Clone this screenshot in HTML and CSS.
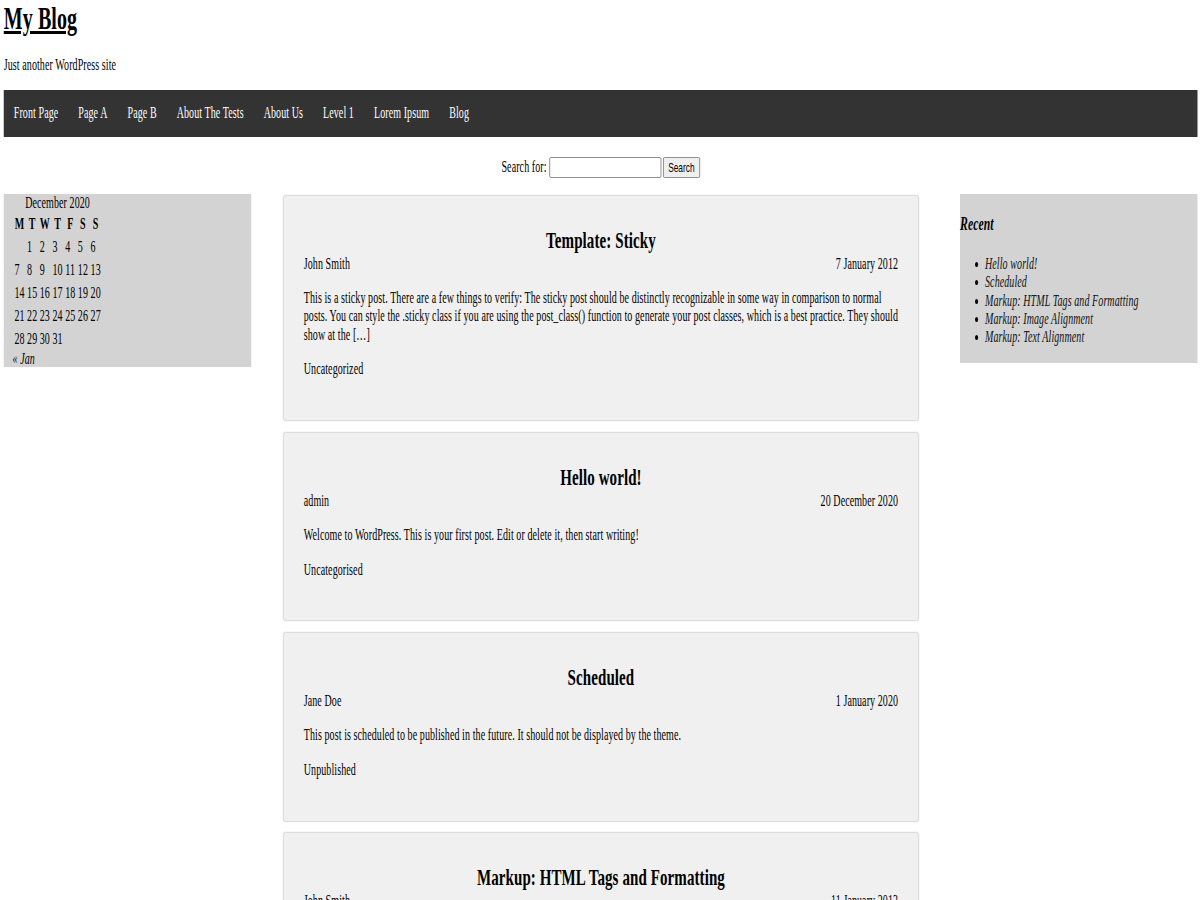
FILE: index.html
```html
<!DOCTYPE html>
<html lang="en">
<head>
<meta charset="utf-8">
<title>My Blog – Just another WordPress site</title>
<link rel="stylesheet" href="styles.css">
</head>
<body>
<div class="page">
  <header class="site-header">
    <h1 class="site-title"><a href="#">My Blog</a></h1>
    <p class="tagline">Just another WordPress site</p>
  </header>

  <nav class="main-nav">
    <ul>
      <li><a href="#">Front Page</a></li>
      <li><a href="#">Page A</a></li>
      <li><a href="#">Page B</a></li>
      <li><a href="#">About The Tests</a></li>
      <li><a href="#">About Us</a></li>
      <li><a href="#">Level 1</a></li>
      <li><a href="#">Lorem Ipsum</a></li>
      <li><a href="#">Blog</a></li>
    </ul>
  </nav>

  <form class="search" onsubmit="return false">
    <label for="s">Search for:</label>
    <input id="s" type="text">
    <button type="button">Search</button>
  </form>

  <div class="layout">
    <aside class="sidebar sidebar-left">
      <table class="calendar">
        <caption>December 2020</caption>
        <thead>
          <tr><th>M</th><th>T</th><th>W</th><th>T</th><th>F</th><th>S</th><th>S</th></tr>
        </thead>
        <tbody>
          <tr><td></td><td>1</td><td>2</td><td>3</td><td>4</td><td>5</td><td>6</td></tr>
          <tr><td>7</td><td>8</td><td>9</td><td>10</td><td>11</td><td>12</td><td>13</td></tr>
          <tr><td>14</td><td>15</td><td>16</td><td>17</td><td>18</td><td>19</td><td>20</td></tr>
          <tr><td>21</td><td>22</td><td>23</td><td>24</td><td>25</td><td>26</td><td>27</td></tr>
          <tr><td>28</td><td>29</td><td>30</td><td>31</td><td colspan="3"></td></tr>
        </tbody>
      </table>
      <div class="cal-nav"><a href="#">« Jan</a></div>
    </aside>

    <main class="posts">
      <article class="post">
        <h2 class="post-title">Template: Sticky</h2>
        <div class="post-meta"><span>John Smith</span><span>7 January 2012</span></div>
        <p>This is a sticky post. There are a few things to verify: The sticky post should be distinctly recognizable in some way in comparison to normal posts. You can style the .sticky class if you are using the post_class() function to generate your post classes, which is a best practice. They should show at the […]</p>
        <p class="post-cats">Uncategorized</p>
      </article>

      <article class="post">
        <h2 class="post-title">Hello world!</h2>
        <div class="post-meta"><span>admin</span><span>20 December 2020</span></div>
        <p>Welcome to WordPress. This is your first post. Edit or delete it, then start writing!</p>
        <p class="post-cats">Uncategorised</p>
      </article>

      <article class="post">
        <h2 class="post-title">Scheduled</h2>
        <div class="post-meta"><span>Jane Doe</span><span>1 January 2020</span></div>
        <p>This post is scheduled to be published in the future. It should not be displayed by the theme.</p>
        <p class="post-cats">Unpublished</p>
      </article>

      <article class="post">
        <h2 class="post-title">Markup: HTML Tags and Formatting</h2>
        <div class="post-meta"><span>John Smith</span><span>11 January 2013</span></div>
        <p>Headings Header one Header two Header three Header four Header five Header six Blockquotes Single line blockquote: Stay hungry. Stay foolish. […]</p>
        <p class="post-cats">Markup</p>
      </article>
    </main>

    <aside class="sidebar sidebar-right">
      <h3 class="widget-title">Recent</h3>
      <ul class="recent-list">
        <li><a href="#">Hello world!</a></li>
        <li><a href="#">Scheduled</a></li>
        <li><a href="#">Markup: HTML Tags and Formatting</a></li>
        <li><a href="#">Markup: Image Alignment</a></li>
        <li><a href="#">Markup: Text Alignment</a></li>
      </ul>
    </aside>
  </div>
</div>
</body>
</html>
```
FILE: styles.css
```css
html {
  scrollbar-width: none;
}

body {
  margin: 0;
  font-family: "Liberation Serif", "Times New Roman", serif;
  font-size: 16px;
  line-height: 1.15;
  letter-spacing: 0.15px;
  color: #000;
  background: #fff;
  overflow-x: hidden;
}

.page {
  width: 1920px;
  box-sizing: border-box;
  padding: 0 4px 0 6px;
  transform: scaleX(0.625);
  transform-origin: 0 0;
}

.site-title {
  margin: 0 0 19px;
  font-size: 32px;
  font-weight: bold;
}

.site-title a {
  color: #000;
  text-decoration: underline;
}

.tagline {
  margin: 0 0 16px;
}

.main-nav {
  background: #333;
}

.main-nav ul {
  list-style: none;
  margin: 0;
  padding: 0;
  display: flex;
}

.main-nav a {
  display: block;
  padding: 14px 16px;
  color: #fff;
  text-decoration: none;
}

.search {
  display: flex;
  justify-content: center;
  align-items: center;
  height: 21px;
  margin: 20px 0 16.5px;
}

.search label {
  margin-right: 4px;
}

.search input {
  width: 179px;
  height: 21px;
  box-sizing: border-box;
  margin: 0 3px 0 0;
  padding: 1px 2px;
  border: 1px solid #767676;
  border-radius: 2px;
  background: #fff;
  font-family: "Liberation Sans", Arial, sans-serif;
  font-size: 13.333px;
  letter-spacing: 0;
}

.search button {
  width: 59px;
  height: 21px;
  box-sizing: border-box;
  margin: 0;
  padding: 1px 6px;
  border: 1px solid #767676;
  border-radius: 2px;
  background: #efefef;
  color: #000;
  font-family: "Liberation Sans", Arial, sans-serif;
  font-size: 13.333px;
  letter-spacing: 0;
}

.layout {
  display: flex;
  align-items: flex-start;
}

.sidebar {
  background: #d3d3d3;
}

.sidebar-left {
  width: 396px;
  box-sizing: border-box;
  padding: 0 14px;
}

.calendar {
  border-spacing: 2px;
}

.calendar caption {
  line-height: 17px;
}

.calendar th,
.calendar td {
  padding: 1px;
  line-height: 19px;
}

.calendar td {
  text-align: left;
}

.cal-nav {
  line-height: 16px;
}

.cal-nav a {
  color: #000;
  font-style: italic;
  text-decoration: none;
}

.posts {
  width: 1017px;
  margin-left: 51px;
  padding-top: 0.5px;
}

.post {
  background: #f0f0f0;
  border: 1px solid #d9d9d9;
  border-radius: 4px;
  box-shadow: 0 0 2px rgba(0, 0, 0, 0.15);
  padding: 31px 32px 25.5px;
  margin-bottom: 10.5px;
}

.post-title {
  margin: 0 0 0.5px;
  font-size: 24px;
  font-weight: bold;
  text-align: center;
}

.post-meta {
  display: flex;
  justify-content: space-between;
}

.post p {
  margin: 16px 0;
}

.sidebar-right {
  width: 380px;
  margin-left: 66px;
  display: flow-root;
}

.widget-title {
  margin: 18.72px 0;
  font-size: 18.72px;
  font-weight: bold;
  font-style: italic;
}

.recent-list {
  margin: 20.5px 0 16px;
  padding-left: 40px;
}

.recent-list a {
  color: #111;
  font-style: italic;
  text-decoration: none;
}
```
